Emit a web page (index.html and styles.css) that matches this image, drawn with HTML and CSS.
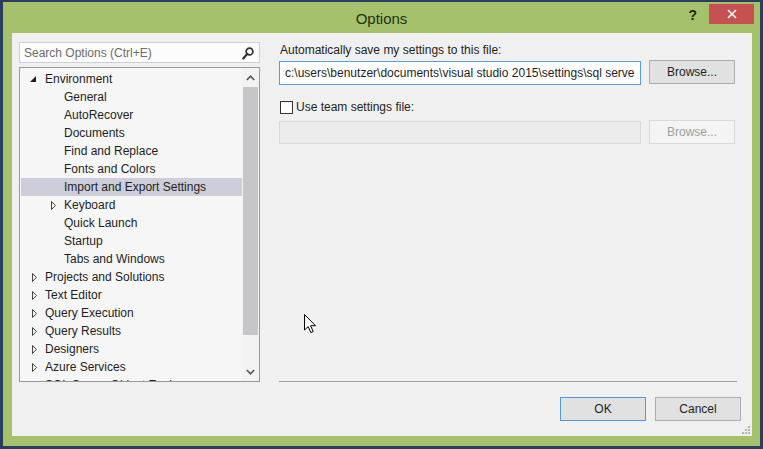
FILE: index.html
```html
<!DOCTYPE html>
<html lang="en">
<head>
  <meta charset="UTF-8">
  <title>Options</title>
  <link rel="stylesheet" href="styles.css">
</head>
<body>

  <div class="window">
    <div class="titlebar">
      <span></span>
      <span class="title">Options</span>
      <div class="controls">
        <span class="help">?</span>
        <span class="close">
          <svg width="10" height="10" viewBox="0 0 10 10"><path d="M1,1 L9,9 M9,1 L1,9" stroke="#fff" stroke-width="1.6"/></svg>
        </span>
      </div>
    </div>

    <div class="content">
      <div class="nav">
        <div class="search">
          <span class="placeholder">Search Options (Ctrl+E)</span>
          <svg class="search-icon" width="12" height="13" viewBox="0 0 12 13">
            <circle cx="7.5" cy="4.5" r="3.4" fill="none" stroke="#333" stroke-width="1.7"/>
            <path d="M5.2,7 L1.2,11.5" stroke="#333" stroke-width="2.2" stroke-linecap="round"/>
          </svg>
        </div>

        <div class="tree">
          <div class="tree-items">
            <div class="row lvl0"><span class="twisty open"><svg width="6" height="6" viewBox="0 0 6 6"><polygon points="6,0 6,6 0,6" fill="#1e1e1e"/></svg></span>Environment</div>
            <div class="row lvl1"><span class="twisty"></span>General</div>
            <div class="row lvl1"><span class="twisty"></span>AutoRecover</div>
            <div class="row lvl1"><span class="twisty"></span>Documents</div>
            <div class="row lvl1"><span class="twisty"></span>Find and Replace</div>
            <div class="row lvl1"><span class="twisty"></span>Fonts and Colors</div>
            <div class="row lvl1 selected"><span class="twisty"></span>Import and Export Settings</div>
            <div class="row lvl1"><span class="twisty"><svg width="5" height="9" viewBox="0 0 5 9"><polygon points="0.5,0.5 4.5,4.5 0.5,8.5" fill="none" stroke="#444"/></svg></span>Keyboard</div>
            <div class="row lvl1"><span class="twisty"></span>Quick Launch</div>
            <div class="row lvl1"><span class="twisty"></span>Startup</div>
            <div class="row lvl1"><span class="twisty"></span>Tabs and Windows</div>
            <div class="row lvl0"><span class="twisty"><svg width="5" height="9" viewBox="0 0 5 9"><polygon points="0.5,0.5 4.5,4.5 0.5,8.5" fill="none" stroke="#444"/></svg></span>Projects and Solutions</div>
            <div class="row lvl0"><span class="twisty"><svg width="5" height="9" viewBox="0 0 5 9"><polygon points="0.5,0.5 4.5,4.5 0.5,8.5" fill="none" stroke="#444"/></svg></span>Text Editor</div>
            <div class="row lvl0"><span class="twisty"><svg width="5" height="9" viewBox="0 0 5 9"><polygon points="0.5,0.5 4.5,4.5 0.5,8.5" fill="none" stroke="#444"/></svg></span>Query Execution</div>
            <div class="row lvl0"><span class="twisty"><svg width="5" height="9" viewBox="0 0 5 9"><polygon points="0.5,0.5 4.5,4.5 0.5,8.5" fill="none" stroke="#444"/></svg></span>Query Results</div>
            <div class="row lvl0"><span class="twisty"><svg width="5" height="9" viewBox="0 0 5 9"><polygon points="0.5,0.5 4.5,4.5 0.5,8.5" fill="none" stroke="#444"/></svg></span>Designers</div>
            <div class="row lvl0"><span class="twisty"><svg width="5" height="9" viewBox="0 0 5 9"><polygon points="0.5,0.5 4.5,4.5 0.5,8.5" fill="none" stroke="#444"/></svg></span>Azure Services</div>
            <div class="row lvl0"><span class="twisty"><svg width="5" height="9" viewBox="0 0 5 9"><polygon points="0.5,0.5 4.5,4.5 0.5,8.5" fill="none" stroke="#444"/></svg></span>SQL Server Object Explorer</div>
          </div>
          <div class="scrollbar">
            <div class="sb-btn"><svg width="9" height="6" viewBox="0 0 9 6"><polyline points="0.8,5 4.5,1.2 8.2,5" fill="none" stroke="#555" stroke-width="1.6"/></svg></div>
            <div class="sb-track"><div class="sb-thumb"></div></div>
            <div class="sb-btn"><svg width="9" height="6" viewBox="0 0 9 6"><polyline points="0.8,1 4.5,4.8 8.2,1" fill="none" stroke="#555" stroke-width="1.6"/></svg></div>
          </div>
        </div>
      </div>

      <div class="main">
        <div class="settings">
          <div class="label">Automatically save my settings to this file:</div>
          <div class="file-row">
            <input class="file-input focused" type="text" readonly value="c:\users\benutzer\documents\visual studio 2015\settings\sql server management studio\CurrentSettings.vssettings">
            <button class="btn">Browse...</button>
          </div>

          <label class="check-row"><span class="checkbox"></span>Use team settings file:</label>
          <div class="file-row">
            <input class="file-input disabled" type="text" readonly value="">
            <button class="btn disabled">Browse...</button>
          </div>
        </div>

        <div class="separator"></div>

        <div class="buttons">
          <button class="btn default">OK</button>
          <button class="btn">Cancel</button>
        </div>
      </div>

      <svg class="grip" width="9" height="9" viewBox="0 0 9 9">
        <rect x="7" y="1" width="2" height="2" fill="#b4b4b4"/>
        <rect x="4" y="4" width="2" height="2" fill="#b4b4b4"/>
        <rect x="7" y="4" width="2" height="2" fill="#b4b4b4"/>
        <rect x="1" y="7" width="2" height="2" fill="#b4b4b4"/>
        <rect x="4" y="7" width="2" height="2" fill="#b4b4b4"/>
        <rect x="7" y="7" width="2" height="2" fill="#b4b4b4"/>
      </svg>
    </div>
  </div>

  <svg class="cursor" width="13" height="20" viewBox="0 0 13 20">
    <path d="M0.5,0.5 L0.5,16 L4.2,12.6 L6.8,18.6 L9.2,17.6 L6.6,11.7 L11.5,11.7 Z" fill="#fff" stroke="#000" stroke-width="1"/>
  </svg>

</body>
</html>
```

FILE: styles.css
```css
body {
  margin: 0;
  background: #2b3e5e;
  font-family: 'Liberation Sans', Arial, sans-serif;
  font-size: 12px;
  color: #1e1e1e;
  width: 763px;
  height: 449px;
  overflow: hidden;
  position: relative;
}

.window {
  margin: 2px 3px 0 3px;
  height: 444px;
  background: #a5c16b;
  display: flex;
  flex-direction: column;
}

.titlebar {
  height: 31px;
  display: grid;
  grid-template-columns: 1fr auto 1fr;
  align-items: start;
}

.title {
  font-size: 15px;
  color: #243016;
  line-height: 15px;
  margin-top: 9px;
}

.controls {
  justify-self: end;
  display: flex;
  align-items: flex-start;
  margin-right: 6px;
}

.help {
  font-weight: bold;
  font-size: 14px;
  color: #1d2612;
  margin-top: 5px;
  margin-right: 12px;
}

.close {
  width: 45px;
  height: 20px;
  margin-top: 2px;
  background: #c75050;
  display: flex;
  align-items: center;
  justify-content: center;
}

.content {
  flex: 1;
  margin: 0 8px 10px 9px;
  background: #f0f0f0;
  display: flex;
  gap: 19px;
  padding: 9px 11px 15px 7px;
  position: relative;
}

.nav {
  width: 241px;
  display: flex;
  flex-direction: column;
  gap: 4px;
}

.search {
  height: 21px;
  box-sizing: border-box;
  border: 1px solid #cccedb;
  background: #fcfcfc;
  display: flex;
  align-items: center;
  justify-content: space-between;
  padding: 1px 5px 0 4px;
}

.placeholder {
  color: #6d6d6d;
}

.tree {
  height: 315px;
  box-sizing: border-box;
  border: 1px solid #9a9a9a;
  background: #f6f6f6;
  display: flex;
}

.tree-items {
  flex: 1;
  overflow: hidden;
  padding-top: 2px;
}

.row {
  height: 18px;
  line-height: 18px;
  display: flex;
  align-items: center;
  white-space: nowrap;
  margin-left: 1px;
}

.row.lvl0 {
  padding-left: 8px;
}

.row.lvl1 {
  padding-left: 27px;
}

.row.selected {
  background: #cdced9;
}

.twisty {
  width: 16px;
  height: 18px;
  display: flex;
  align-items: center;
  padding-left: 3px;
  box-sizing: border-box;
}

.twisty.open {
  padding-left: 1px;
}

.scrollbar {
  width: 17px;
  display: flex;
  flex-direction: column;
  background: #f3f3f3;
}

.sb-btn {
  height: 19px;
  display: flex;
  align-items: center;
  justify-content: center;
}

.sb-track {
  flex: 1;
  padding: 0 1px;
}

.sb-thumb {
  height: 248px;
  background: #c6c6c8;
}

.main {
  flex: 1;
  display: flex;
  flex-direction: column;
}

.settings {
  flex: 1;
}

.label {
  line-height: 16px;
  margin-left: 1px;
}

.file-row {
  display: flex;
  align-items: flex-start;
  gap: 8px;
  margin-top: 2px;
}

.file-input {
  width: 362px;
  height: 24px;
  box-sizing: border-box;
  margin: 1px 0 0 0;
  padding: 0 5px;
  font-family: inherit;
  font-size: 12px;
  color: #1e1e1e;
  outline: none;
}

.file-input.focused {
  border: 1px solid #569de5;
  background: #fff;
}

.file-input.disabled {
  height: 23px;
  border: 1px solid #d9d9d9;
  background: #ececec;
}

.btn {
  width: 86px;
  height: 24px;
  box-sizing: border-box;
  border: 1px solid #adadad;
  background: #e1e1e1;
  font-family: inherit;
  font-size: 12px;
  color: #1e1e1e;
  padding: 0;
  margin: 0;
}

.btn.disabled {
  border-color: #d9d9d9;
  background: #f4f4f4;
  color: #a0a0a0;
}

.btn.default {
  border-color: #4c9ae0;
}

.check-row {
  display: flex;
  align-items: center;
  gap: 3px;
  margin-top: 16px;
  margin-left: 1px;
  height: 13px;
  line-height: 13px;
}

.check-row + .file-row {
  margin-top: 6px;
}

.checkbox {
  width: 13px;
  height: 13px;
  box-sizing: border-box;
  border: 1px solid #333;
  background: #fff;
}

.separator {
  height: 1px;
  background: #a0a0a0;
  margin-right: 4px;
}

.buttons {
  display: flex;
  justify-content: flex-end;
  gap: 9px;
  margin-top: 15px;
}

.grip {
  position: absolute;
  right: 2px;
  bottom: 2px;
}

.cursor {
  position: absolute;
  left: 304px;
  top: 314px;
}
```
